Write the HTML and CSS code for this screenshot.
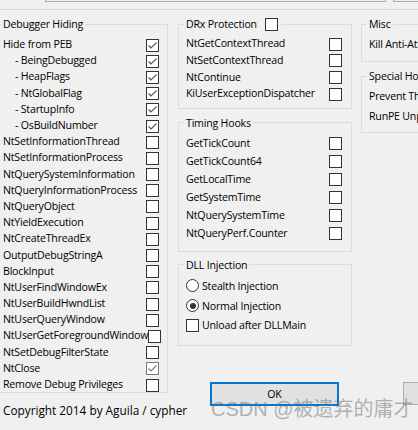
FILE: index.html
```html
<!DOCTYPE html>
<html>
<head>
<meta charset="utf-8">
<link rel="stylesheet" href="styles.css">
</head>
<body>
<div class="topbar"><div class="tb1"></div><div class="tb2"></div></div>
<div class="main">
  <div class="col col1">
    <fieldset class="grp g-debug">
      <legend>Debugger Hiding</legend>
      <div class="row"><span>Hide from PEB</span><i class="cb on"><svg viewBox="0 0 11 11"><polyline points="1.5,5.5 4,8 9.5,2.5"/></svg></i></div>
      <div class="row sub"><span>- BeingDebugged</span><i class="cb on"><svg viewBox="0 0 11 11"><polyline points="1.5,5.5 4,8 9.5,2.5"/></svg></i></div>
      <div class="row sub"><span>- HeapFlags</span><i class="cb on"><svg viewBox="0 0 11 11"><polyline points="1.5,5.5 4,8 9.5,2.5"/></svg></i></div>
      <div class="row sub"><span>- NtGlobalFlag</span><i class="cb on"><svg viewBox="0 0 11 11"><polyline points="1.5,5.5 4,8 9.5,2.5"/></svg></i></div>
      <div class="row sub"><span>- StartupInfo</span><i class="cb on"><svg viewBox="0 0 11 11"><polyline points="1.5,5.5 4,8 9.5,2.5"/></svg></i></div>
      <div class="row sub"><span>- OsBuildNumber</span><i class="cb on"><svg viewBox="0 0 11 11"><polyline points="1.5,5.5 4,8 9.5,2.5"/></svg></i></div>
      <div class="row"><span>NtSetInformationThread</span><i class="cb"></i></div>
      <div class="row"><span>NtSetInformationProcess</span><i class="cb"></i></div>
      <div class="row"><span>NtQuerySystemInformation</span><i class="cb"></i></div>
      <div class="row"><span>NtQueryInformationProcess</span><i class="cb"></i></div>
      <div class="row"><span>NtQueryObject</span><i class="cb"></i></div>
      <div class="row"><span>NtYieldExecution</span><i class="cb"></i></div>
      <div class="row"><span>NtCreateThreadEx</span><i class="cb"></i></div>
      <div class="row"><span>OutputDebugStringA</span><i class="cb"></i></div>
      <div class="row"><span>BlockInput</span><i class="cb"></i></div>
      <div class="row"><span>NtUserFindWindowEx</span><i class="cb"></i></div>
      <div class="row"><span>NtUserBuildHwndList</span><i class="cb"></i></div>
      <div class="row"><span>NtUserQueryWindow</span><i class="cb"></i></div>
      <div class="row"><span>NtUserGetForegroundWindow</span><i class="cb"></i></div>
      <div class="row"><span>NtSetDebugFilterState</span><i class="cb"></i></div>
      <div class="row"><span>NtClose</span><i class="cb on light"><svg viewBox="0 0 11 11"><polyline points="1.5,5.5 4,8 9.5,2.5"/></svg></i></div>
      <div class="row"><span>Remove Debug Privileges</span><i class="cb"></i></div>
    </fieldset>
    <div class="copy">Copyright 2014 by Aguila / cypher</div>
  </div>

  <div class="col col2">
    <fieldset class="grp g-drx">
      <legend><span>DRx Protection</span><i class="cb"></i></legend>
      <div class="row"><span>NtGetContextThread</span><i class="cb"></i></div>
      <div class="row"><span>NtSetContextThread</span><i class="cb"></i></div>
      <div class="row"><span>NtContinue</span><i class="cb"></i></div>
      <div class="row"><span>KiUserExceptionDispatcher</span><i class="cb"></i></div>
    </fieldset>
    <fieldset class="grp g-time">
      <legend>Timing Hooks</legend>
      <div class="row"><span>GetTickCount</span><i class="cb"></i></div>
      <div class="row"><span>GetTickCount64</span><i class="cb"></i></div>
      <div class="row"><span>GetLocalTime</span><i class="cb"></i></div>
      <div class="row"><span>GetSystemTime</span><i class="cb"></i></div>
      <div class="row"><span>NtQuerySystemTime</span><i class="cb"></i></div>
      <div class="row"><span>NtQueryPerf.Counter</span><i class="cb"></i></div>
    </fieldset>
    <fieldset class="grp g-dll">
      <legend>DLL Injection</legend>
      <div class="opt r1"><i class="rb"></i><span>Stealth Injection</span></div>
      <div class="opt r2"><i class="rb sel"></i><span>Normal Injection</span></div>
      <div class="opt r3"><i class="cb"></i><span>Unload after DLLMain</span></div>
    </fieldset>
    <div class="btn ok">OK</div>
  </div>

  <div class="col col3">
    <fieldset class="grp g-misc">
      <legend>Misc</legend>
      <div class="line">Kill Anti-Attach</div>
    </fieldset>
    <fieldset class="grp g-special">
      <legend>Special Hooks</legend>
      <div class="line">Prevent Thread creation</div>
      <div class="line">RunPE Unpacker</div>
    </fieldset>
    <div class="btn cancel">Cancel</div>
  </div>
</div>
<div class="watermark">CSDN @被遗弃的庸才</div>
</body>
</html>
```

FILE: styles.css
```css
html, body {
  margin: 0;
  padding: 0;
}
body {
  background: #f0f0f0;
  width: 418px;
  height: 430px;
  overflow: hidden;
  position: relative;
  font-family: "Open Sans", "Noto Sans", sans-serif;
  font-size: 10.6px;
  letter-spacing: -0.2px;
  color: #000;
}
.topbar {
  height: 9px;
  border-bottom: 1px solid #dadada;
  display: flex;
}
.tb1 {
  margin-left: 45px;
  width: 339px;
  height: 1px;
  border: 1px solid #adadad;
  border-top: none;
}
.tb2 {
  margin-left: 7px;
  flex: 1;
  height: 1px;
  border: 1px solid #adadad;
  border-top: none;
  border-right: none;
}
.main {
  display: flex;
  align-items: flex-start;
}
.col {
  display: flex;
  flex-direction: column;
  flex: none;
}
.col1 {
  margin-left: -5px;
  width: 173px;
}
.col2 {
  margin-left: 10px;
  width: 174px;
}
.col3 {
  margin-left: 9px;
  width: 140px;
}
.grp {
  margin: 6px 0 0;
  padding: 0;
  border: 1px solid #dcdcdc;
  min-width: 0;
}
.grp legend {
  margin-left: 5px;
  padding: 0 2px;
  line-height: 16px;
  white-space: nowrap;
}
.row {
  display: flex;
  align-items: center;
  justify-content: space-between;
  padding: 0 8px 0 7px;
  white-space: nowrap;
}
.row.sub {
  padding-left: 19px;
}
.cb {
  display: block;
  flex: none;
  width: 11px;
  height: 11px;
  border: 1px solid #333;
  background: #fff;
  margin-top: 2px;
}
.cb svg {
  display: block;
  width: 11px;
  height: 11px;
  fill: none;
  stroke: #555;
  stroke-width: 1.1;
}
.cb.light {
  border-color: #7a7a7a;
}
.cb.light svg {
  stroke: #7a7a7a;
}
.g-debug {
  padding: 4px 0 0;
}
.g-debug .row {
  height: 16.2px;
}
.copy {
  margin-top: 9px;
  padding-left: 8px;
  line-height: 16px;
  font-size: 11.8px;
  letter-spacing: 0;
  white-space: nowrap;
}
.g-drx {
  padding: 3px 0 6px;
}
.g-drx legend {
  display: flex;
  align-items: center;
  padding: 0 3px 0 2px;
}
.g-drx legend .cb {
  margin: 0 0 0 8px;
}
.g-drx .row {
  height: 16.67px;
  padding-right: 9px;
}
.g-time {
  padding: 3px 0 9px;
}
.g-time .row {
  height: 18px;
  padding-right: 9px;
}
.g-dll {
  margin-top: 5px;
  padding: 3px 0 10px;
}
.opt {
  display: flex;
  align-items: center;
  padding-left: 7px;
  height: 20px;
  white-space: nowrap;
}
.opt.r3 {
  height: 19px;
}
.opt .cb {
  margin: 0 3px 0 0;
}
.rb {
  display: block;
  flex: none;
  width: 11px;
  height: 11px;
  border: 1px solid #333;
  border-radius: 50%;
  background: #fff;
  margin-right: 3px;
  position: relative;
}
.rb.sel::after {
  content: "";
  position: absolute;
  left: 2.5px;
  top: 2.5px;
  width: 6px;
  height: 6px;
  border-radius: 50%;
  background: #333;
}
.btn {
  box-sizing: border-box;
  background: #e1e1e1;
  border: 1px solid #adadad;
  height: 24px;
  display: flex;
  align-items: center;
  justify-content: center;
  letter-spacing: 0;
}
.btn.ok {
  margin: 36px 0 0 32px;
  width: 129px;
  border: 2px solid #0078d7;
}
.btn.cancel {
  margin: 249px 0 0 42px;
  width: 80px;
  height: 23px;
}
.g-misc {
  padding: 4px 0 9px;
}
.g-special {
  padding: 2px 0 6px;
}
.line {
  padding-left: 7px;
  white-space: nowrap;
}
.g-misc .line {
  height: 16px;
  line-height: 16px;
}
.g-special .line {
  height: 20px;
  line-height: 20px;
}
.watermark {
  position: absolute;
  left: 211px;
  top: 396px;
  font-family: "Liberation Sans", "Noto Sans CJK SC", sans-serif;
  font-size: 20px;
  line-height: 26px;
  letter-spacing: 0;
  color: rgba(110, 110, 110, 0.5);
  white-space: nowrap;
}
```
